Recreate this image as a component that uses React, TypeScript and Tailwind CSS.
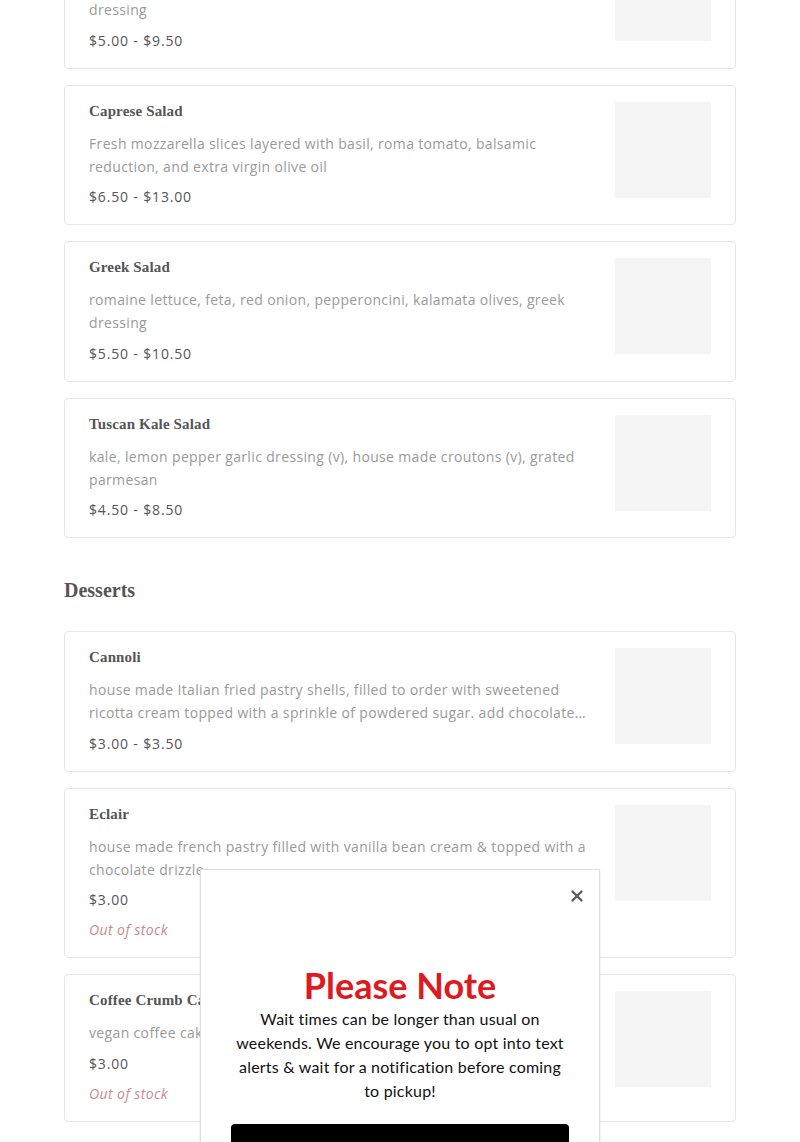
import React from 'react';
import { X } from 'lucide-react';

type Item = {
    name: string;
    desc: string;
    price: string;
    outOfStock?: boolean;
};

const salads: Item[] = [
    { name: 'Caesar Salad', desc: 'romaine lettuce, shaved parmesan, house made croutons (v), caesar\ndressing', price: '$5.00 - $9.50' },
    { name: 'Caprese Salad', desc: 'Fresh mozzarella slices layered with basil, roma tomato, balsamic reduction, and extra virgin olive oil', price: '$6.50 - $13.00' },
    { name: 'Greek Salad', desc: 'romaine lettuce, feta, red onion, pepperoncini, kalamata olives, greek dressing', price: '$5.50 - $10.50' },
    { name: 'Tuscan Kale Salad', desc: 'kale, lemon pepper garlic dressing (v), house made croutons (v), grated parmesan', price: '$4.50 - $8.50' },
];

const desserts: Item[] = [
    { name: 'Cannoli', desc: 'house made Italian fried pastry shells, filled to order with sweetened ricotta cream topped with a sprinkle of powdered sugar. add chocolate chips or pistachios for an extra treat', price: '$3.00 - $3.50' },
    { name: 'Eclair', desc: 'house made french pastry filled with vanilla bean cream & topped with a chocolate drizzle', price: '$3.00', outOfStock: true },
    { name: 'Coffee Crumb Cake', desc: 'vegan coffee cake with a cinnamon sugar streusel topping', price: '$3.00', outOfStock: true },
];

function MenuCard({ item }: { item: Item }) {
    return (
        <div className="flex gap-4 rounded-[4px] border border-[#e6e6e6] bg-white px-6 pt-[15px] pb-4">
            <div className="min-w-0 flex-1">
                <h3 className="font-['Liberation_Serif',serif] text-[15px] font-bold leading-5 tracking-[0.01em] text-[#555]">{item.name}</h3>
                <p className="mt-[11px] line-clamp-2 whitespace-pre-line font-['Open_Sans',sans-serif] text-[14px] leading-[23px] tracking-[0.025em] text-[#9a9a9a]">{item.desc}</p>
                <p className="mt-[8.5px] font-['Open_Sans',sans-serif] text-[14px] leading-[22px] tracking-[0.06em] text-[#555]">{item.price}</p>
                {item.outOfStock && (
                    <p className="mt-2 font-['Open_Sans',sans-serif] text-[14px] italic leading-[22px] tracking-[0.03em] text-[#c98a8c]">Out of stock</p>
                )}
            </div>
            <div className="mt-px h-24 w-24 shrink-0 bg-[#f5f5f5]"></div>
        </div>
    );
}

export default function App() {
    return (
        <div className="relative h-[1142px] overflow-hidden bg-white">
            <div className="mx-auto -mt-[72px] w-[672px]">
                {/* Salads (heading is above the fold) */}
                <div className="flex flex-col gap-4">
                    {salads.map((item) => (
                        <MenuCard key={item.name} item={item} />
                    ))}
                </div>

                <h2 className="mt-[38px] mb-[27px] font-['Liberation_Serif',serif] text-[20px] font-bold leading-7 text-[#555]">Desserts</h2>

                <div className="flex flex-col gap-4">
                    {desserts.map((item) => (
                        <MenuCard key={item.name} item={item} />
                    ))}
                </div>
            </div>

            {/* Notice popup */}
            <div className="absolute left-[200px] top-[869px] h-[320px] w-[400px] border border-[#dedede] bg-white px-[30px] pt-[95px] shadow-sm">
                <button className="absolute right-[13px] top-[17px] text-[#5a5a5a]">
                    <X className="h-[18px] w-[18px]" strokeWidth={3.2} />
                </button>
                <h2 className="text-center font-['Lato',sans-serif] text-[36px] font-bold leading-10 text-[#de1a1f]">Please Note</h2>
                <p className="mt-[2px] text-center font-['Lato',sans-serif] text-[16px] leading-6 tracking-[0.2px] text-[#111]">
                    Wait times can be longer than usual on weekends. We encourage you to opt into text alerts &amp; wait for a notification before coming to pickup!
                </p>
                <button className="mt-[21px] h-12 w-full rounded-[4px] bg-black font-['Lato',sans-serif] text-[16px] text-white">Shop now</button>
            </div>
        </div>
    );
}
